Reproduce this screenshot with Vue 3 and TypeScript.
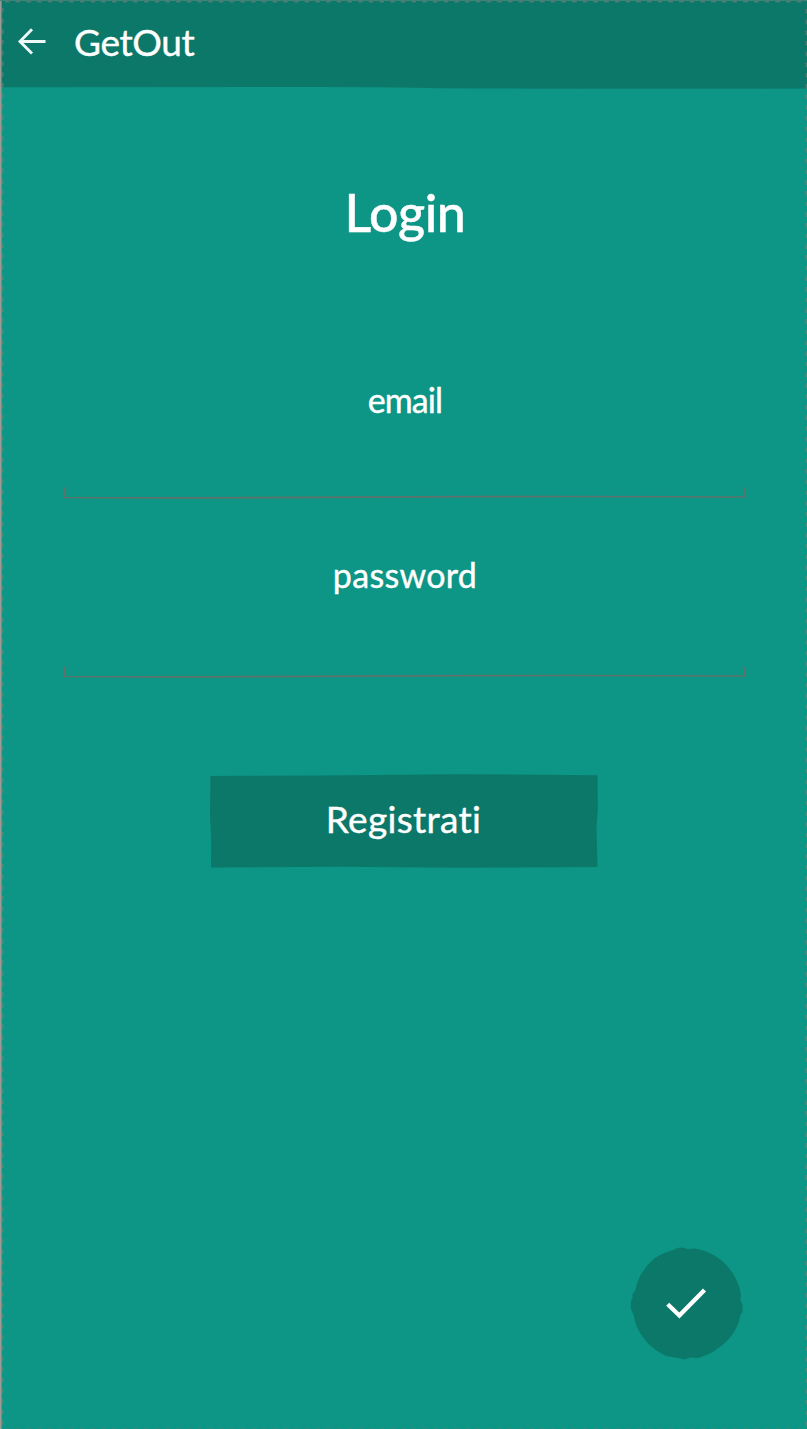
<script setup lang="ts">
import { ref } from 'vue'

interface Field {
  id: string
  label: string
  type: string
}

const fields: Field[] = [
  { id: 'email', label: 'email', type: 'email' },
  { id: 'password', label: 'password', type: 'password' },
]
const values = ref<Record<string, string>>({ email: '', password: '' })
</script>

<template>
  <div class="screen">
    <header class="bar">
      <svg class="bar-bg" width="807" height="90" viewBox="0 0 807 90" aria-hidden="true">
        <path d="M0 0H807V88.500Q620 89.200 440 88.200Q390 86.800 300 87L0 87.300Z" fill="#0c7869" />
      </svg>
      <svg class="back" width="30" height="30" viewBox="0 0 30 30" aria-label="Back">
        <path d="M15 2.300L3 14.500L15 26.500M3 14.500H28.500" fill="none" stroke="#eef8f6" stroke-width="2.900" />
      </svg>
      <span class="brand">GetOut</span>
    </header>

    <main class="content">
      <h1 class="title">Login</h1>
      <div v-for="f in fields" :key="f.id" class="field">
        <label :for="f.id" class="label" :class="f.id">{{ f.label }}</label>
        <div class="entry">
          <input :id="f.id" v-model="values[f.id]" :type="f.type" />
          <svg class="line" width="684" height="14" viewBox="0 0 684 14" aria-hidden="true">
            <path d="M2.500 2.500V12.500Q80 13 190 12.600T410 11.700T683 12V2.500" fill="none" stroke="#5f736d" stroke-width="1.700" />
          </svg>
        </div>
      </div>
      <button class="register" type="button">
        <svg class="register-bg" width="390" height="96" viewBox="0 0 390 96" aria-hidden="true">
          <path d="M1.500 3L110 2.500L250 1.200L388.500 2.200L388.800 36L387.500 55L388.500 94L250 94.800L130 93.700L2 94.500L2.200 68L1 42Z" fill="#0c7869" />
        </svg>
        <span class="register-text">Registrati</span>
      </button>
    </main>

    <button class="confirm" type="button" aria-label="Conferma">
      <svg width="114" height="114" viewBox="0 0 114 114">
        <path d="M47 1L52 .5L58 2L65 1.500L75 4Q96 12 106 32Q110 41 111 48L110.500 53L112.500 58V65L110.500 68Q108 82 98 93Q84 107 68 111L61 110.500L54 112.500L48 111L36 109Q15 99 6 78L3.500 68L1 62L.7 55L2.500 51V47L5 44Q9 24 25 11Q34 5 45 2.500Z" fill="#0c7869" />
        <path d="M37.700 57.200L49.400 68.500L74.500 43" fill="none" stroke="#fff" stroke-width="4.300" />
      </svg>
    </button>

    <svg class="frame" width="807" height="1429" viewBox="0 0 807 1429" aria-hidden="true">
      <path d="M.8 0V1429" stroke="#9b9b95" stroke-width="1.600" />
      <path d="M0 .5H807" stroke="#3f8378" stroke-width="1" />
      <path d="M2.800 8V1429M5 1.800H807M806.500 9V1429" fill="none" stroke="#7b817a" stroke-opacity=".6" stroke-width="1.500" stroke-dasharray="4.500 6.200" />
      <path d="M5 1428.700H807" stroke="#647a71" stroke-opacity=".5" stroke-dasharray="4.500 6.200" />
    </svg>
  </div>
</template>

<style>
html,
body {
  margin: 0;
  background: #0d9585;
}
</style>

<style scoped>
.screen {
  position: relative;
  width: 807px;
  height: 1429px;
  overflow: hidden;
  background: #0d9585;
  color: #fff;
  font-family: Lato, "Open Sans", sans-serif;
  font-variant-ligatures: none;
  -webkit-text-stroke: 0.4px #fff;
}
svg {
  display: block;
}
.bar {
  position: relative;
  display: flex;
  align-items: center;
  height: 88px;
  box-sizing: border-box;
  padding: 0 0 4px 17px;
}
.bar-bg {
  position: absolute;
  top: 0;
  left: 0;
}
.back,
.brand {
  position: relative;
}
.brand {
  margin-left: 27px;
  font-size: 37px;
  line-height: 44px;
  letter-spacing: -0.4px;
}
.content {
  display: flex;
  flex-direction: column;
  align-items: center;
  padding: 92px 0 0 1px;
}
.title {
  margin: 0 0 76px;
  padding-left: 2px;
  font-size: 52px;
  line-height: 64px;
  letter-spacing: -0.5px;
  font-weight: 500;
}
.field {
  display: flex;
  flex-direction: column;
  align-items: center;
  height: 179px;
}
.label {
  font-size: 34px;
  line-height: 44px;
  margin-top: 58px;
}
.label.email {
  letter-spacing: -0.9px;
  padding-left: 2px;
}
.label.password {
  margin-top: 54px;
  padding-left: 2px;
  letter-spacing: 0.3px;
}
.entry {
  display: flex;
  flex-direction: column;
  margin-top: auto;
}
.entry input {
  height: 50px;
  box-sizing: border-box;
  border: 0;
  padding: 0 12px;
  background: transparent;
  color: inherit;
  font: inherit;
  outline: none;
}
.register {
  position: relative;
  display: flex;
  align-items: center;
  justify-content: center;
  width: 390px;
  height: 96px;
  margin: 95px 1px 0 0;
  padding: 0 0 4px;
  border: 0;
  background: none;
  color: inherit;
  font: 37px/44px Lato, "Open Sans", sans-serif;
  font-variant-ligatures: none;
  letter-spacing: 0.3px;
}
.register-bg {
  position: absolute;
  inset: 0;
}
.register-text {
  position: relative;
}
.confirm {
  position: absolute;
  left: 630px;
  top: 1247px;
  padding: 0;
  border: 0;
  background: none;
}
.frame {
  position: absolute;
  inset: 0;
  pointer-events: none;
}
</style>
